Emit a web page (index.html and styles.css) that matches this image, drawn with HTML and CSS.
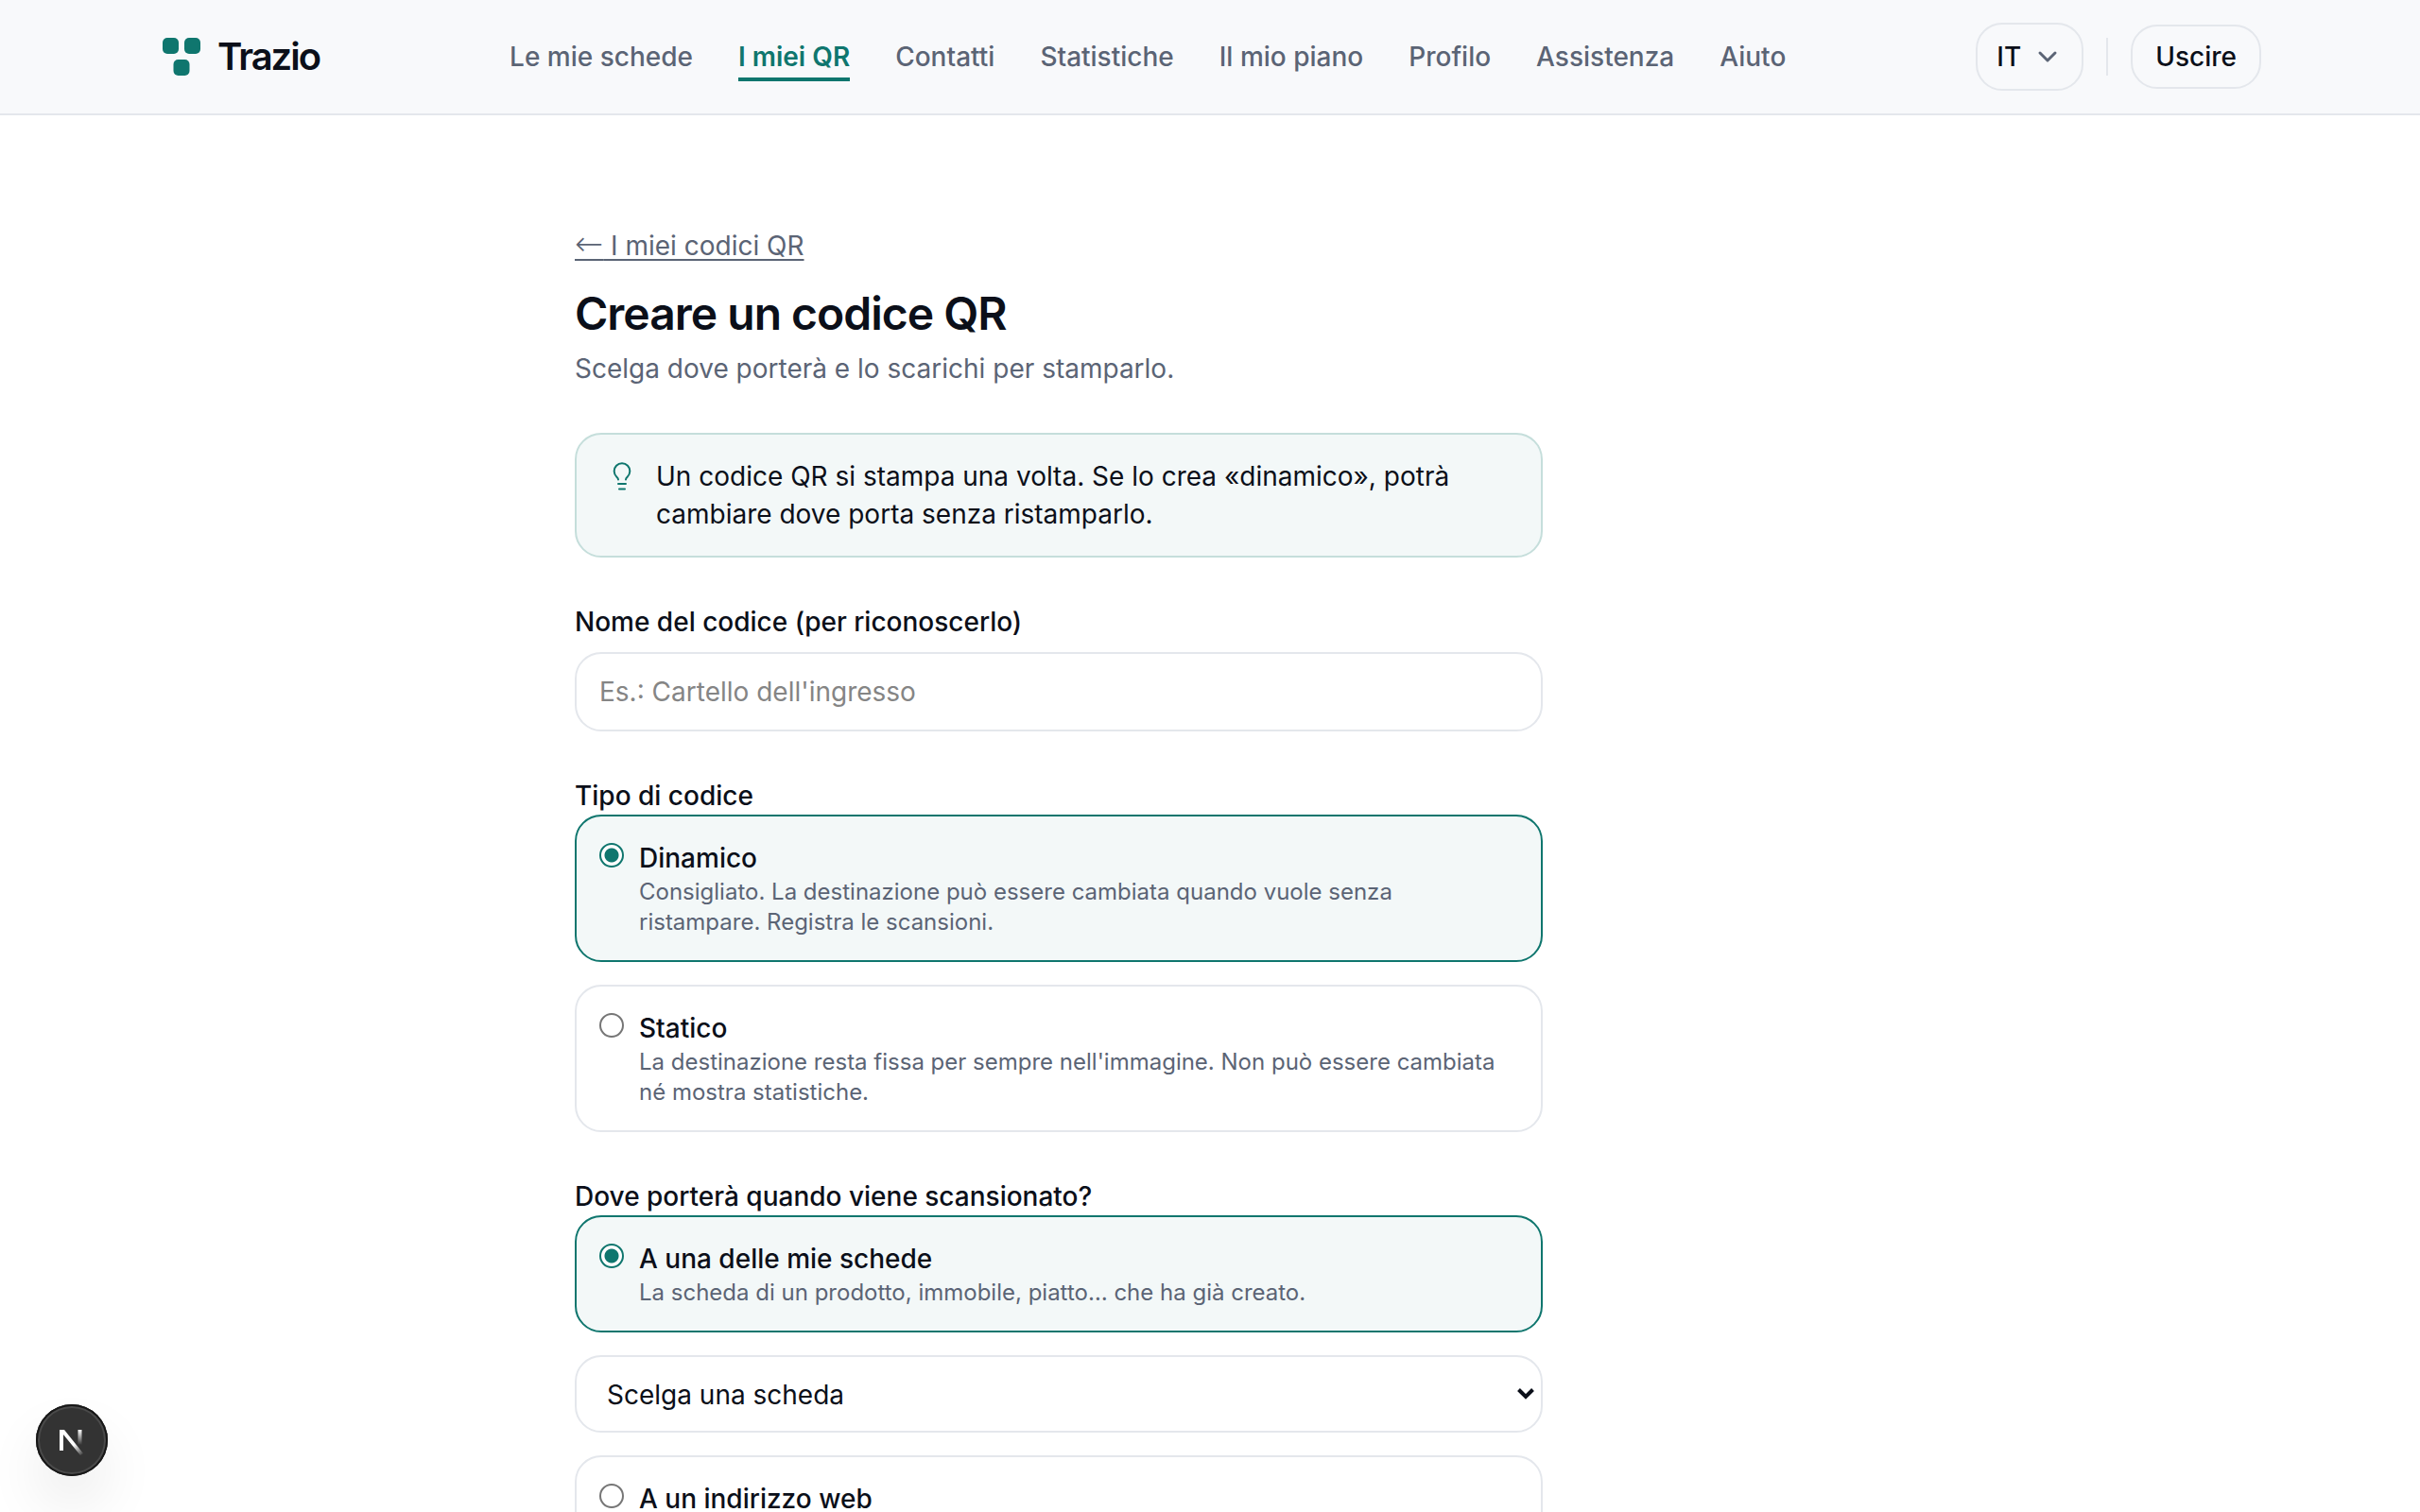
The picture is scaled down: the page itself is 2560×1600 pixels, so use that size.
FILE: index.html
```html
<!DOCTYPE html>
<html lang="it">
<head>
<meta charset="utf-8">
<meta name="viewport" content="width=device-width, initial-scale=1">
<title>Creare un codice QR · Trazio</title>
<link rel="stylesheet" href="styles.css">
</head>
<body>
<header class="site-header">
  <div class="header-inner">
    <a class="brand" href="#">
      <svg class="brand-mark" viewBox="0 0 48 48" aria-hidden="true"><rect x="4" y="4" width="17" height="17" rx="5"/><rect x="27" y="4" width="17" height="17" rx="5"/><rect x="15.500" y="27" width="17" height="17" rx="5"/></svg>
      <span>Trazio</span>
    </a>
    <nav class="main-nav" aria-label="Principale">
      <a href="#">Le mie schede</a>
      <a class="active" href="#" aria-current="page">I miei QR</a>
      <a href="#">Contatti</a>
      <a href="#">Statistiche</a>
      <a href="#">Il mio piano</a>
      <a href="#">Profilo</a>
      <a href="#">Assistenza</a>
      <a href="#">Aiuto</a>
    </nav>
    <div class="header-actions">
      <button class="pill lang" type="button">IT
        <svg class="chevron" viewBox="0 0 24 24" aria-hidden="true"><path d="M4 8l8 8 8-8"/></svg>
      </button>
      <span class="divider"></span>
      <button class="pill" type="button">Uscire</button>
    </div>
  </div>
</header>
<main class="page">
  <div class="column">
    <a class="back" href="#"><span class="arrow">←</span> I miei codici QR</a>
    <h1>Creare un codice QR</h1>
    <p class="lead">Scelga dove porterà e lo scarichi per stamparlo.</p>
    <form class="qr-form">
      <div class="notice">
        <svg class="bulb" viewBox="0 0 32 32" aria-hidden="true"><path d="M12 19.500c0-1-.7-2-1.600-2.800a8.300 8.300 0 1 1 11.200 0c-.9.8-1.600 1.800-1.600 2.800M12 24h8M13 29.500h6"/></svg>
        <p>Un codice QR si stampa una volta. Se lo crea «dinamico», potrà cambiare dove porta senza ristamparlo.</p>
      </div>
      <div class="field">
        <label for="qr-name">Nome del codice (per riconoscerlo)</label>
        <input class="text-input" id="qr-name" type="text" placeholder="Es.: Cartello dell'ingresso">
      </div>
      <fieldset>
        <legend>Tipo di codice</legend>
        <div class="options">
          <label class="option">
            <input type="radio" name="tipo" checked>
            <span class="option-text"><span class="option-title">Dinamico</span><span class="option-hint">Consigliato. La destinazione può essere cambiata quando vuole senza ristampare. Registra le scansioni.</span></span>
          </label>
          <label class="option">
            <input type="radio" name="tipo">
            <span class="option-text"><span class="option-title">Statico</span><span class="option-hint">La destinazione resta fissa per sempre nell'immagine. Non può essere cambiata né mostra statistiche.</span></span>
          </label>
        </div>
      </fieldset>
      <fieldset>
        <legend>Dove porterà quando viene scansionato?</legend>
        <div class="options">
          <label class="option">
            <input type="radio" name="dest" checked>
            <span class="option-text"><span class="option-title">A una delle mie schede</span><span class="option-hint">La scheda di un prodotto, immobile, piatto… che ha già creato.</span></span>
          </label>
          <div class="select-wrap">
            <select aria-label="Scheda"><option>Scelga una scheda</option></select>
            <svg class="select-arrow" viewBox="0 0 18 12" aria-hidden="true"><path d="M1.500 1.500L9 9l7.500-7.500"/></svg>
          </div>
          <label class="option">
            <input type="radio" name="dest">
            <span class="option-text"><span class="option-title">A un indirizzo web</span></span>
          </label>
        </div>
      </fieldset>
    </form>
  </div>
</main>
<button class="dev-badge" type="button" aria-label="Next.js">
  <svg viewBox="0 0 76 76" aria-hidden="true">
    <defs>
      <linearGradient id="stem" x1="0" y1="0" x2="0" y2="1"><stop offset="0" stop-color="#fff"/><stop offset="1" stop-color="#fff" stop-opacity="0"/></linearGradient>
      <linearGradient id="diag" gradientUnits="userSpaceOnUse" x1="40" y1="43" x2="50" y2="54"><stop offset="0" stop-color="#fff"/><stop offset="1" stop-color="#fff" stop-opacity="0"/></linearGradient>
    </defs>
    <path fill="url(#diag)" d="M25 27h5L50 52l-3 2L29 32v17h-4z"/>
    <rect x="44.500" y="27" width="4" height="16" fill="url(#stem)"/>
  </svg>
</button>
</body>
</html>
```

FILE: styles.css
```css
:root {
  --accent: #0f766e;
  --ink: #0b0f19;
  --muted: #5b6475;
  --line: #e4e7ec;
  --tint: #f3f8f8;
}

* { box-sizing: border-box; }

body {
  margin: 0;
  background: #fff;
  color: var(--ink);
  font: 400 28px/40px Inter, "Liberation Sans", sans-serif;
}

h1, p { margin: 0; }
a { color: inherit; text-decoration: none; }
button, input, select { font: inherit; color: inherit; }

.site-header {
  background: #f8f9fb;
  border-bottom: 2px solid var(--line);
}
.header-inner {
  display: flex;
  align-items: center;
  justify-content: space-between;
  max-width: 2224px;
  height: 120px;
  margin: 0 auto;
}
.brand {
  display: flex;
  align-items: center;
  gap: 14px;
  font-size: 40px;
  font-weight: 600;
  letter-spacing: -2px;
}
.brand-mark { width: 48px; height: 48px; fill: var(--accent); }

.main-nav { display: flex; gap: 48px; color: var(--muted); font-weight: 500; }
.main-nav a { padding: 2px 0; border-bottom: 4px solid transparent; border-top: 4px solid transparent; }
.main-nav .active { color: var(--accent); font-weight: 600; border-bottom-color: var(--accent); }

.header-actions { display: flex; align-items: center; gap: 24px; }
.pill {
  padding: 12px 24px;
  border: 2px solid var(--line);
  border-radius: 28px;
  background: transparent;
  font-weight: 500;
}
.lang { display: flex; align-items: center; gap: 16px; padding: 14px 24px 14px 20px; }
.chevron { width: 24px; height: 24px; fill: none; stroke: var(--muted); stroke-width: 3; stroke-linecap: round; stroke-linejoin: round; }
.divider { width: 2px; height: 40px; background: var(--line); }

.page { max-width: 1344px; margin: 0 auto; padding: 118px 0 96px; }
.column { max-width: 1024px; }
.back {
  display: table;
  color: var(--muted);
  text-decoration: underline;
  text-underline-offset: 4px;
}
.arrow { font-family: "DejaVu Sans", sans-serif; font-size: 36px; font-weight: 200; line-height: 20px; }
h1 { margin: 22px 0 8px; font-size: 48px; line-height: 60px; font-weight: 600; letter-spacing: -1px; }
.lead { color: var(--muted); }

.qr-form { display: flex; flex-direction: column; gap: 48px; margin-top: 48px; }
.notice {
  display: flex;
  gap: 20px;
  padding: 24px 32px;
  border: 2px solid #c5dedb;
  border-radius: 28px;
  background: var(--tint);
}
.bulb { flex: none; width: 32px; height: 32px; margin-top: 4px; fill: none; stroke: var(--accent); stroke-width: 2; stroke-linecap: round; stroke-linejoin: round; }

.field { display: flex; flex-direction: column; gap: 12px; }
.field label, legend { font-weight: 500; }
.text-input {
  width: 100%;
  height: 84px;
  padding: 0 24px;
  border: 2px solid var(--line);
  border-radius: 28px;
  background: #fff;
}
.text-input::placeholder { color: #858585; }

fieldset { min-width: 0; margin: 0; padding: 0; border: 0; }
legend { padding: 0; }
.options { display: flex; flex-direction: column; gap: 24px; }
.option {
  display: flex;
  align-items: flex-start;
  gap: 16px;
  padding: 24px;
  border: 2px solid var(--line);
  border-radius: 28px;
}
.option:has(input:checked) { border-color: var(--accent); background: var(--tint); }
.option input {
  flex: none;
  width: 26px;
  height: 26px;
  margin: 4px 0 0;
  appearance: none;
  border: 2px solid #767676;
  border-radius: 50%;
  background: #fff;
}
.option input:checked { border-color: var(--accent); background: radial-gradient(circle, var(--accent) 7px, #fff 8px); }
.option-text { display: flex; flex-direction: column; }
.option-title { font-weight: 500; }
.option-hint { color: var(--muted); font-size: 24px; line-height: 32px; }

.select-wrap { position: relative; display: flex; }
.select-wrap select {
  width: 100%;
  height: 82px;
  padding: 2px 32px 0;
  border: 2px solid var(--line);
  border-radius: 28px;
  background: #fff;
  appearance: none;
}
.select-arrow {
  position: absolute;
  top: 35px;
  right: 9px;
  width: 18px;
  height: 12px;
  fill: none;
  stroke: var(--ink);
  stroke-width: 4;
  pointer-events: none;
}

.dev-badge {
  position: fixed;
  left: 38px;
  bottom: 38px;
  width: 76px;
  height: 76px;
  padding: 0;
  border: 0;
  border-radius: 50%;
  background: #333;
  box-shadow: inset 0 0 0 2px #171717, inset 0 0 0 4px #4a4a4a, 0 32px 64px -8px rgba(0, 0, 0, 0.12);
}
.dev-badge svg { display: block; width: 76px; height: 76px; }
```
